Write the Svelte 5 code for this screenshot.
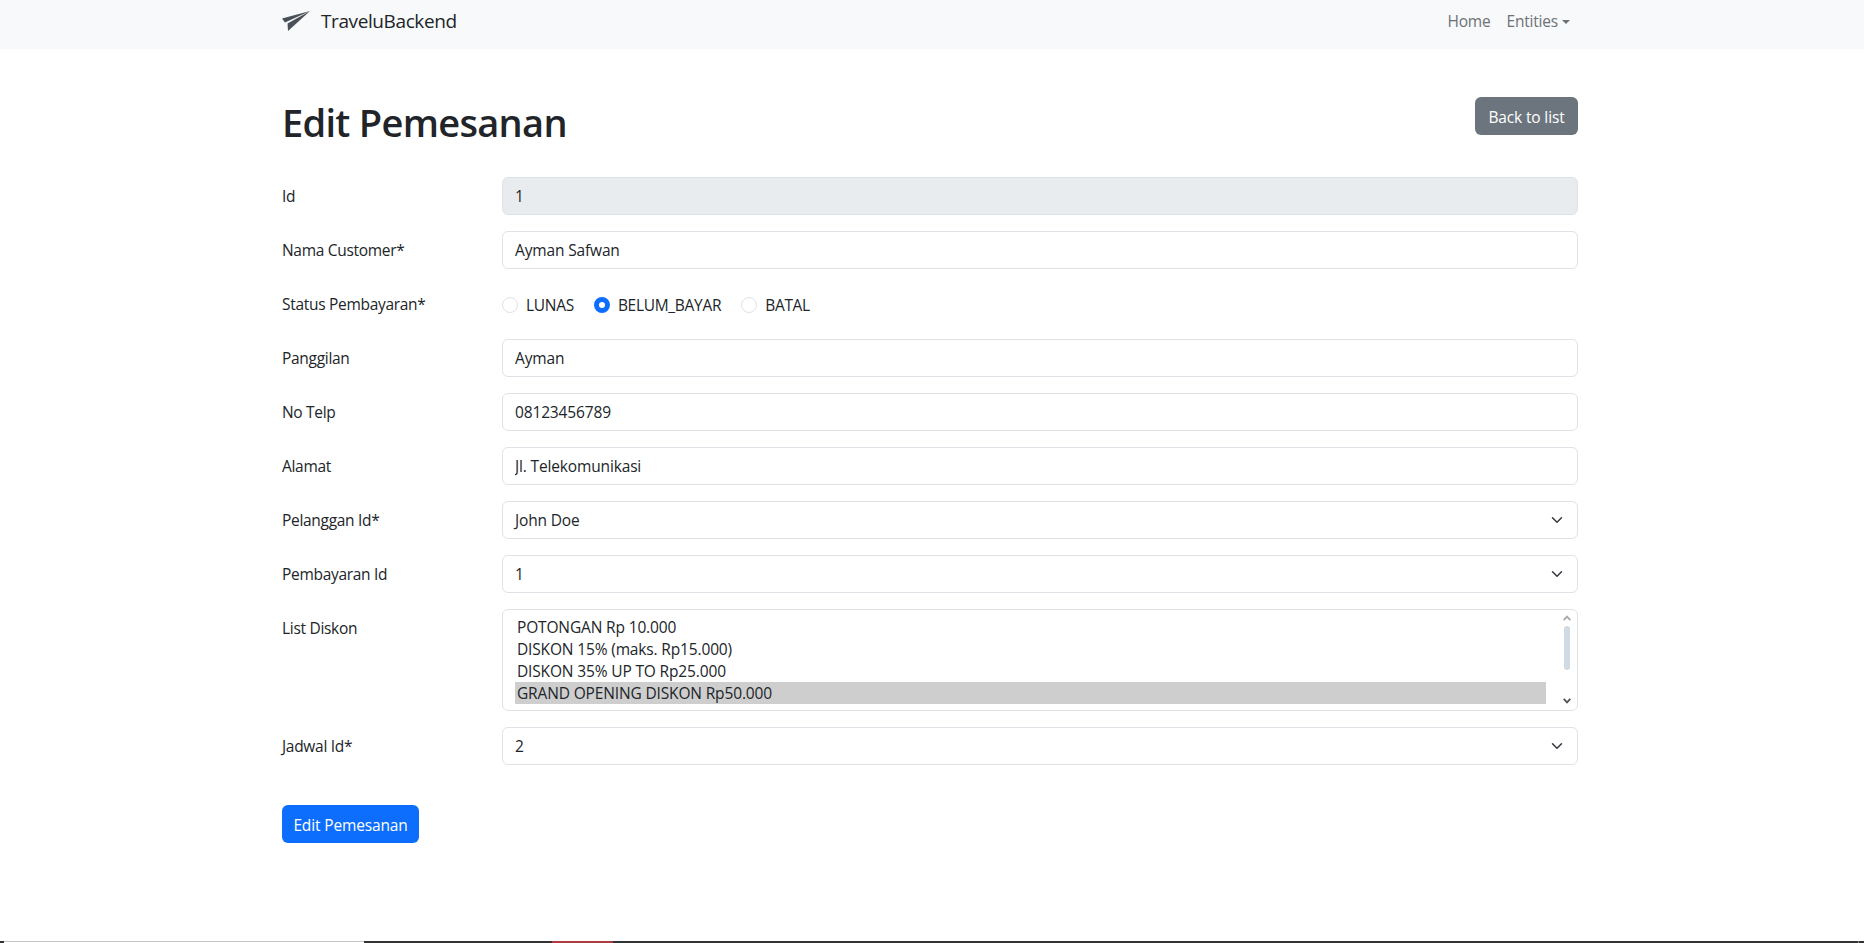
<script lang="ts">
	const textRows = [
		{ label: 'Panggilan', value: 'Ayman' },
		{ label: 'No Telp', value: '08123456789' },
		{ label: 'Alamat', value: 'Jl. Telekomunikasi' }
	];
	const statuses = ['LUNAS', 'BELUM_BAYAR', 'BATAL'];
	const diskon = [
		'POTONGAN Rp 10.000',
		'DISKON 15% (maks. Rp15.000)',
		'DISKON 35% UP TO Rp25.000',
		'GRAND OPENING DISKON Rp50.000'
	];
	let status = $state('BELUM_BAYAR');
</script>

{#snippet chevron()}
	<svg class="chevron" viewBox="0 0 16 16" aria-hidden="true">
		<path fill="none" stroke="#343a40" stroke-linecap="round" stroke-linejoin="round" stroke-width="2" d="m2 5 6 6 6-6" />
	</svg>
{/snippet}

{#snippet selectRow(label: string, value: string)}
	<div class="row">
		<span class="label">{label}</span>
		<div class="control select">{value}{@render chevron()}</div>
	</div>
{/snippet}

<nav class="navbar">
	<div class="nav-inner">
		<a class="brand" href="#top">
			<svg class="plane" viewBox="0 0 28 20" aria-hidden="true">
				<path fill="#495057" d="M0 7.500 28 0 3 11.500z" />
				<path fill="#495057" d="M28 0 5.500 12.500 6 20z" />
			</svg>
			<span>TraveluBackend</span>
		</a>
		<div class="links">
			<a href="#top">Home</a>
			<a href="#top" class="toggle">Entities</a>
		</div>
	</div>
</nav>

<main>
	<div class="title-row">
		<h1>Edit Pemesanan</h1>
		<button class="btn grey" type="button">Back to list</button>
	</div>

	<div class="row">
		<span class="label">Id</span>
		<input class="control" value="1" disabled />
	</div>
	<div class="row">
		<span class="label">Nama Customer*</span>
		<input class="control" value="Ayman Safwan" />
	</div>
	<div class="row">
		<span class="label">Status Pembayaran*</span>
		<div class="radios">
			{#each statuses as s}
				<label class="radio">
					<input type="radio" name="status" value={s} bind:group={status} />
					<span>{s}</span>
				</label>
			{/each}
		</div>
	</div>
	{#each textRows as r}
		<div class="row">
			<span class="label">{r.label}</span>
			<input class="control" value={r.value} />
		</div>
	{/each}
	{@render selectRow('Pelanggan Id*', 'John Doe')}
	{@render selectRow('Pembayaran Id', '1')}
	<div class="row top">
		<span class="label">List Diskon</span>
		<div class="listbox" role="listbox" aria-label="List Diskon">
			<div class="options">
				{#each diskon as d, i}
					<div class="option" class:selected={i === 3} role="option" aria-selected={i === 3}>{d}</div>
				{/each}
			</div>
			<div class="scrollbar">
				<svg viewBox="0 0 8 6" aria-hidden="true"><path fill="none" stroke="#a9a9a9" stroke-width="1.800" d="m.7 5.200 3.300-3.600 3.300 3.600" /></svg>
				<div class="track"><div class="thumb"></div></div>
				<svg viewBox="0 0 8 6" aria-hidden="true"><path fill="none" stroke="#555" stroke-width="1.800" d="m.7 .8 3.300 3.600 3.300-3.600" /></svg>
			</div>
		</div>
	</div>
	{@render selectRow('Jadwal Id*', '2')}

	<button class="btn blue" type="button">Edit Pemesanan</button>
</main>

<div class="taskbar">
	<span class="seg light"></span>
	<span class="seg red"></span>
	<span class="seg tick"></span>
</div>

<style>
	:global(body) {
		margin: 0;
		background: #fff;
		color: #212529;
		font-family: 'Open Sans', 'Noto Sans', sans-serif;
		font-size: 15.5px;
		line-height: 24px;
		overflow: hidden;
	}

	.navbar {
		height: 49px;
		background: #f8f9fa;
	}

	.nav-inner {
		width: 1296px;
		padding-right: 4px;
		margin: 0 auto;
		height: 42px;
		display: flex;
		align-items: center;
		justify-content: space-between;
	}

	.brand {
		display: flex;
		align-items: center;
		gap: 11px;
		color: #212529;
		font-size: 19px;
		text-decoration: none;
		letter-spacing: -0.4px;
	}

	.plane {
		width: 28px;
		height: 20px;
	}

	.links {
		display: flex;
		gap: 16px;
		margin-right: 8px;
		letter-spacing: -0.2px;
	}

	.links a {
		color: #6c7176;
		text-decoration: none;
	}

	.toggle::after {
		content: '';
		display: inline-block;
		margin-left: 4px;
		vertical-align: 3px;
		border-top: 4.800px solid;
		border-left: 4.800px solid transparent;
		border-right: 4.800px solid transparent;
	}

	main {
		width: 1296px;
		padding-right: 4px;
		margin: 0 auto;
		letter-spacing: -0.15px;
	}

	.title-row {
		display: flex;
		justify-content: space-between;
		align-items: flex-start;
		padding-top: 48px;
		height: 128px;
		box-sizing: border-box;
	}

	h1 {
		margin: 1px 0 0;
		font-size: 38px;
		font-weight: 600;
		line-height: 48px;
		letter-spacing: -0.7px;
	}

	.btn {
		font: inherit;
		letter-spacing: inherit;
		height: 38px;
		padding: 1px 0 0;
		border-radius: 6px;
		color: #fff;
		border: 1px solid transparent;
	}

	.grey {
		background: #6c757d;
		width: 103px;
	}

	.blue {
		background: #0d6efd;
		margin-top: 40px;
		display: block;
		width: 137px;
	}

	.row {
		display: grid;
		grid-template-columns: 220px 1fr;
		align-items: center;
		margin-bottom: 16px;
		min-height: 38px;
	}

	.row.top {
		align-items: start;
	}

	.row.top .label {
		padding-top: 7px;
	}

	.label {
		letter-spacing: -0.3px;
	}

	.control {
		font: inherit;
		letter-spacing: inherit;
		color: #212529;
		box-sizing: border-box;
		width: 100%;
		height: 38px;
		padding: 6px 12px;
		border: 1px solid #dee2e6;
		border-radius: 6px;
		background: #fff;
	}

	.control:disabled {
		background: #e9ecef;
		opacity: 1;
	}

	.select {
		display: flex;
		align-items: center;
		justify-content: space-between;
	}

	.chevron {
		width: 16px;
		height: 12px;
	}

	.radios {
		display: flex;
		gap: 20px;
		margin-top: 2px;
		letter-spacing: -0.3px;
	}

	.radio {
		display: flex;
		align-items: center;
		gap: 8px;
	}

	.radio input {
		appearance: none;
		margin: 0;
		width: 16px;
		height: 16px;
		box-sizing: border-box;
		border: 1px solid #dee2e6;
		border-radius: 50%;
		background: #fff;
	}

	.radio input:checked {
		border: 5px solid #0d6efd;
	}

	.listbox {
		box-sizing: border-box;
		height: 102px;
		border: 1px solid #dee2e6;
		border-radius: 6px;
		padding: 6px 3px 6px 12px;
		display: flex;
		gap: 14px;
		overflow: hidden;
	}

	.options {
		flex: 1;
	}

	.option {
		height: 22px;
		line-height: 22px;
		padding: 0 2px;
		white-space: nowrap;
	}

	.selected {
		background: #cecece;
	}

	.scrollbar {
		width: 14px;
		margin: -1px 0 0;
		display: flex;
		flex-direction: column;
		align-items: center;
		justify-content: space-between;
	}

	.scrollbar svg {
		width: 8px;
		height: 6px;
	}

	.track {
		flex: 1;
		width: 100%;
		display: flex;
		justify-content: center;
	}

	.thumb {
		width: 6px;
		height: 44px;
		margin-top: 5px;
		border-radius: 3px;
		background: #cfdae3;
	}

	.taskbar {
		position: fixed;
		left: 0;
		right: 0;
		bottom: 0;
		height: 2px;
		background: #333;
	}

	.seg {
		position: absolute;
		top: 0;
		height: 2px;
	}

	.light {
		left: 4px;
		width: 360px;
		background: linear-gradient(#c4c4c4 50%, #fff 50%);
	}

	.red {
		left: 552px;
		width: 61px;
		background: #b23a3e;
	}

	.tick {
		left: 1858px;
		width: 1px;
		background: #888;
	}
</style>
